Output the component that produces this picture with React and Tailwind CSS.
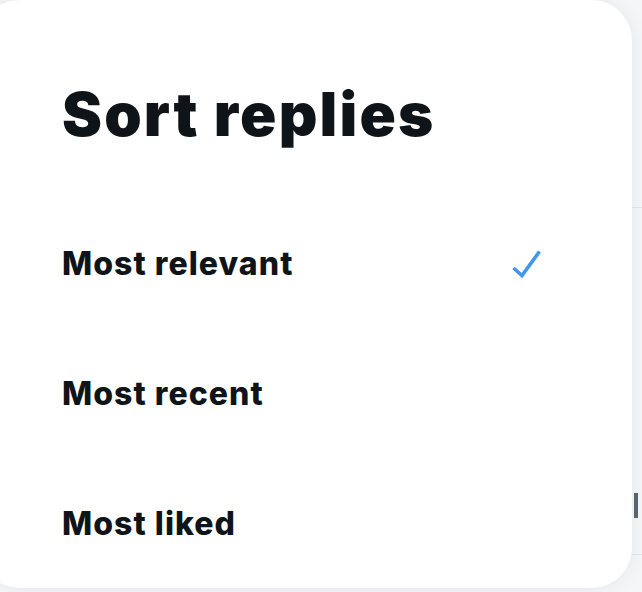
export default function App() {
  const items = [
    { label: "Most relevant", checked: true },
    { label: "Most recent", checked: false },
    { label: "Most liked", checked: false },
  ];
  return (
    <div
      className="relative w-[642px] h-[592px] overflow-hidden bg-[#f5f6f7]"
      style={{ fontFamily: "Inter, 'Noto Sans', sans-serif" }}
    >
      {/* page behind the sheet */}
      <div className="flex flex-col">
        <div className="h-[208px] border-b border-[#e3e5e8]" />
        <div className="h-[347px] border-b border-[#e3e5e8] flex justify-end pt-[285px] pr-[4px]">
          <div className="w-[4px] h-[25px] bg-[#5c6670]" />
        </div>
      </div>

      {/* sheet */}
      <div className="absolute left-[-20px] top-0 w-[652px] h-[588px] rounded-[40px] bg-white shadow-[0_0_18px_rgba(0,0,0,0.07)] flex flex-col pl-[82px] pr-[89px] pt-[84px] text-[#0f1419]">
        <h1 className="text-[60px] leading-[60px] font-black tracking-[2.2px]">Sort replies</h1>
        <div className="mt-[55px] flex flex-col">
          {items.map((it) => (
            <div key={it.label} className="h-[130px] flex items-center justify-between">
              <span className="text-[32px] font-extrabold tracking-[1.05px]">{it.label}</span>
              {it.checked && (
                <svg width="32" height="32" viewBox="0 0 32 32" fill="none">
                  <path
                    d="M2.5 20 L11 27.5 L28.5 3.5"
                    stroke="#4297ea"
                    strokeWidth="3.6"
                    strokeLinejoin="miter"
                  />
                </svg>
              )}
            </div>
          ))}
        </div>
      </div>
    </div>
  );
}
